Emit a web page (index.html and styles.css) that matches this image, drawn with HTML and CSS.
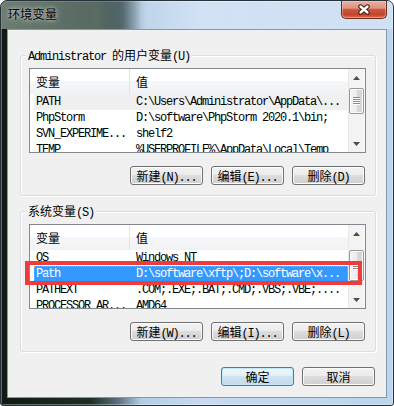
FILE: index.html
```html
<!DOCTYPE html>
<html>

<head>
    <meta charset="utf-8">
    <title>环境变量</title>
    <link rel="stylesheet" href="styles.css">
</head>

<body>
    <div class="window">
        <div class="titlebar">
            <div class="title">环境变量</div>
            <div class="close">
                <svg width="14" height="11" viewBox="0 0 14 11">
                    <path d="M3.5 2.5 L10.5 8.5 M10.5 2.5 L3.5 8.5" stroke="#3d1a13" stroke-width="4.4" stroke-linecap="round" fill="none" />
                    <path d="M3.5 2.5 L10.5 8.5 M10.5 2.5 L3.5 8.5" stroke="#ffffff" stroke-width="2.4" stroke-linecap="round" fill="none" />
                </svg>
            </div>
        </div>
        <div class="client">
            <div class="group">
                <div class="group-title">Administrator <span class="zh">的用户变量</span>(U)</div>
                <div class="list">
                    <div class="list-body">
                        <div class="header">
                            <div class="col-name"><span class="zh">变量</span></div>
                            <div class="col-value"><span class="zh">值</span></div>
                        </div>
                        <div class="row inactive">
                            <div class="name">PATH</div>
                            <div class="value">C:\Users\Administrator\AppData\...</div>
                        </div>
                        <div class="row">
                            <div class="name">PhpStorm</div>
                            <div class="value">D:\software\PhpStorm 2020.1\bin;</div>
                        </div>
                        <div class="row">
                            <div class="name">SVN_EXPERIME...</div>
                            <div class="value">shelf2</div>
                        </div>
                        <div class="row">
                            <div class="name">TEMP</div>
                            <div class="value">%USERPROFILE%\AppData\Local\Temp</div>
                        </div>
                    </div>
                    <div class="scrollbar">
                        <div class="arrow"><svg width="7" height="4"><polygon points="3.5,0 7,4 0,4" fill="#4d4d4d" /></svg></div>
                        <div class="thumb" style="margin-top: 2px; height: 26px;">
                            <svg width="7" height="8">
                                <rect y="0" width="7" height="1" fill="#8c8c8c" /><rect y="1" width="7" height="1" fill="#ffffff" />
                                <rect y="2" width="7" height="1" fill="#8c8c8c" /><rect y="3" width="7" height="1" fill="#ffffff" />
                                <rect y="4" width="7" height="1" fill="#8c8c8c" /><rect y="5" width="7" height="1" fill="#ffffff" />
                                <rect y="6" width="7" height="1" fill="#8c8c8c" /><rect y="7" width="7" height="1" fill="#ffffff" />
                            </svg>
                        </div>
                        <div class="track"></div>
                        <div class="arrow"><svg width="7" height="4"><polygon points="0,0 7,0 3.5,4" fill="#4d4d4d" /></svg></div>
                    </div>
                </div>
                <div class="buttons">
                    <div class="btn"><span class="zh">新建</span>(N)...</div>
                    <div class="btn"><span class="zh">编辑</span>(E)...</div>
                    <div class="btn"><span class="zh">删除</span>(D)</div>
                </div>
            </div>

            <div class="group system">
                <div class="group-title"><span class="zh">系统变量</span>(S)</div>
                <div class="list">
                    <div class="list-body">
                        <div class="header">
                            <div class="col-name"><span class="zh">变量</span></div>
                            <div class="col-value"><span class="zh">值</span></div>
                        </div>
                        <div class="row">
                            <div class="name">OS</div>
                            <div class="value">Windows_NT</div>
                        </div>
                        <div class="row selected">
                            <div class="name">Path</div>
                            <div class="value">D:\software\xftp\;D:\software\x...</div>
                        </div>
                        <div class="row">
                            <div class="name">PATHEXT</div>
                            <div class="value">.COM;.EXE;.BAT;.CMD;.VBS;.VBE;....</div>
                        </div>
                        <div class="row">
                            <div class="name">PROCESSOR_AR...</div>
                            <div class="value">AMD64</div>
                        </div>
                    </div>
                    <div class="scrollbar">
                        <div class="arrow"><svg width="7" height="4"><polygon points="3.5,0 7,4 0,4" fill="#4d4d4d" /></svg></div>
                        <div class="thumb" style="margin-top: 8px; height: 31px;">
                            <svg width="7" height="8">
                                <rect y="0" width="7" height="1" fill="#8c8c8c" /><rect y="1" width="7" height="1" fill="#ffffff" />
                                <rect y="2" width="7" height="1" fill="#8c8c8c" /><rect y="3" width="7" height="1" fill="#ffffff" />
                                <rect y="4" width="7" height="1" fill="#8c8c8c" /><rect y="5" width="7" height="1" fill="#ffffff" />
                                <rect y="6" width="7" height="1" fill="#8c8c8c" /><rect y="7" width="7" height="1" fill="#ffffff" />
                            </svg>
                        </div>
                        <div class="track"></div>
                        <div class="arrow"><svg width="7" height="4"><polygon points="0,0 7,0 3.5,4" fill="#4d4d4d" /></svg></div>
                    </div>
                </div>
                <div class="buttons">
                    <div class="btn"><span class="zh">新建</span>(W)...</div>
                    <div class="btn"><span class="zh">编辑</span>(I)...</div>
                    <div class="btn"><span class="zh">删除</span>(L)</div>
                </div>
            </div>

            <div class="dialog-buttons">
                <div class="btn default"><span class="zh">确定</span></div>
                <div class="btn"><span class="zh">取消</span></div>
            </div>
        </div>

        <!-- red annotation around the selected Path row -->
        <div class="highlight"></div>
    </div>
</body>

</html>
```

FILE: styles.css
```css
* {
    box-sizing: border-box;
}

body {
    margin: 0;
    background-color: #ffffff;
    font-family: "Liberation Mono", "Noto Sans CJK SC", monospace;
    font-size: 12px;
    letter-spacing: -1.2px;
    color: #000000;
}

.zh {
    font-family: "Noto Sans CJK SC", sans-serif;
    letter-spacing: 0;
}

.window {
    position: relative;
    width: 394px;
    height: 406px;
    border: 1px solid #26313a;
    border-radius: 7px 7px 3px 3px;
    background: linear-gradient(to right, #101913 0, #1f2e26 90px, #5d7383 118px, #b3cce6 140px, #c6dbf1 200px, #bcd4ee 100%);
    box-shadow: inset 1px 1px 0 rgba(255, 255, 255, 0.35), inset -1px -1px 0 rgba(255, 255, 255, 0.35);
    overflow: hidden;
}

.titlebar {
    display: flex;
    justify-content: space-between;
    align-items: flex-start;
    height: 28px;
    padding-left: 7px;
    background: linear-gradient(to right, rgba(130, 150, 138, 0.8) 0, rgba(110, 130, 120, 0.7) 95px, rgba(50, 70, 60, 0.4) 122px, rgba(255, 255, 255, 0.15) 145px, rgba(255, 255, 255, 0.3) 100%);
}

.title {
    margin-top: 4px;
    font-family: "Noto Sans CJK SC", sans-serif;
    font-size: 12px;
    line-height: 17px;
    letter-spacing: 0.3px;
    text-shadow: 0 0 6px rgba(255, 255, 255, 0.7), 0 0 3px rgba(255, 255, 255, 0.5);
}

.close {
    display: flex;
    align-items: center;
    justify-content: center;
    width: 46px;
    height: 18px;
    margin-right: 6px;
    border: 1px solid #6c2a1f;
    border-top: 0;
    border-radius: 0 0 5px 5px;
    background: linear-gradient(#eab0a2 0%, #df917e 42%, #c95a41 50%, #c4442a 80%, #dc6c50 100%);
    box-shadow: inset 0 0 0 1px rgba(255, 210, 200, 0.45);
}

.client {
    height: 369px;
    margin: 0 6px;
    padding-left: 12px;
    border: 1px solid #8597aa;
    background-color: #f0f0f0;
}

.group {
    display: flex;
    flex-direction: column;
    width: 356px;
    margin-top: 25px;
    padding: 0 9px 10px 8px;
    border: 1px solid #d5dfe5;
    border-radius: 3px;
    box-shadow: 1px 1px 0 #ffffff, inset 1px 1px 0 #ffffff;
}

.group.system {
    margin-top: 15px;
}

.group-title {
    align-self: flex-start;
    height: 14px;
    margin: -8px 0 0 -3px;
    padding: 0 2px;
    line-height: 14px;
    background-color: #f0f0f0;
    white-space: nowrap;
}

.list {
    display: flex;
    height: 85px;
    margin-top: 6px;
    border: 1px solid #828790;
    background-color: #ffffff;
}

.list-body {
    flex: 1;
    overflow: hidden;
}

.header {
    display: flex;
    height: 25px;
    line-height: 25px;
    background: linear-gradient(#ffffff 0%, #ffffff 48%, #f6f7f9 48%, #f1f2f4 100%);
}

.col-name {
    width: 100px;
    padding-left: 6px;
    border-right: 1px solid #e2e5ea;
}

.col-value {
    padding-left: 6px;
}

.row {
    display: flex;
    height: 16px;
    margin-left: 4px;
    line-height: 16px;
    white-space: nowrap;
}

.row .name {
    width: 96px;
    flex-shrink: 0;
    padding-left: 2px;
    overflow: hidden;
}

.row .value {
    padding-left: 6px;
}

.row.inactive {
    background-color: #f0f0f0;
}

.row.selected {
    background-color: #3399ff;
    color: #ffffff;
    outline: 1px dotted #e0a050;
    outline-offset: -1px;
}

.scrollbar {
    display: flex;
    flex-direction: column;
    width: 17px;
    background-color: #f3f3f3;
    box-shadow: inset 1px 0 0 #eaeaea, inset -1px 0 0 #fafafa;
}

.arrow {
    display: flex;
    align-items: center;
    justify-content: center;
    height: 17px;
}

.thumb {
    display: flex;
    align-items: center;
    justify-content: center;
    margin-left: 1px;
    margin-right: 1px;
    border: 1px solid #979797;
    border-radius: 2px;
    background: linear-gradient(to right, #f4f4f4 0%, #ececec 50%, #dadada 50%, #d4d4d4 100%);
    box-shadow: inset 0 0 0 1px #fbfbfb;
}

.track {
    flex: 1;
}

.buttons {
    display: flex;
    justify-content: flex-end;
    gap: 8px;
    margin-top: 13px;
    padding-right: 1px;
}

.btn {
    width: 73px;
    height: 19px;
    border: 1px solid #707070;
    border-radius: 3px;
    background: linear-gradient(#f2f2f2 0%, #ebebeb 50%, #dddddd 50%, #cfcfcf 100%);
    box-shadow: inset 0 0 0 1px #fbfbfb;
    line-height: 17px;
    text-align: center;
    white-space: nowrap;
}

.btn.default {
    border-color: #3c7fb1;
    background: linear-gradient(#eef6fb 0%, #e2eef7 50%, #cfe3f1 50%, #c2daeb 100%);
    box-shadow: inset 0 0 0 1px #c4e6fa;
}

.dialog-buttons {
    display: flex;
    justify-content: flex-end;
    gap: 8px;
    width: 356px;
    margin-top: 15px;
    padding-right: 1px;
}

.highlight {
    position: absolute;
    left: 24px;
    top: 260px;
    width: 337px;
    height: 24px;
    border: 4px solid #ef3b3a;
}
```
